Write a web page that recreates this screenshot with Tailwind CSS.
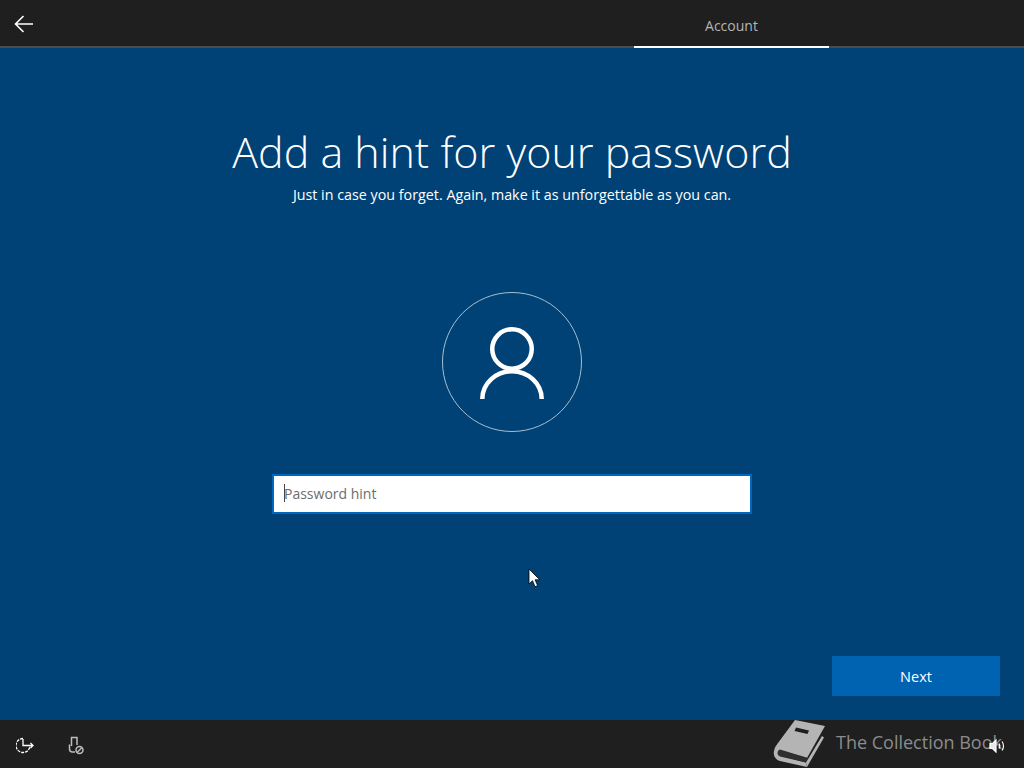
<!DOCTYPE html>
<html lang="en">

<head>
    <meta charset="UTF-8">
    <title>Add a hint for your password</title>
    <script src="https://cdn.jsdelivr.net/npm/@tailwindcss/browser@4"></script>
</head>

<body class="w-[1024px] h-[768px] overflow-hidden bg-[#004275] flex flex-col relative font-['Open_Sans',sans-serif]">
    <header class="h-12 shrink-0 bg-[#1f1f1f] border-b-2 border-[#4b4b4b] flex">
        <div class="w-[634px] pl-[14px] pt-[15px]">
            <svg class="w-[19px] h-[18px]" viewBox="0 0 19 18" fill="none" stroke="#fff" stroke-width="1.6">
                <path d="M9.5 1 1.5 9l8 8M1.5 9H19"></path>
            </svg>
        </div>
        <div class="w-[195px] h-12 border-b-2 border-white flex justify-center pt-[16px] text-[14px] leading-[20px] text-[#b4b4b4]">Account</div>
    </header>

    <main class="flex-1 flex flex-col items-center relative">
        <h1 class="mt-[74px] text-[43px] leading-[60px] font-light text-white">Add a hint for your password</h1>
        <p class="mt-[3px] text-[14.3px] leading-[20px] text-white">Just in case you forget. Again, make it as unforgettable as you can.</p>

        <div class="mt-[87px] w-[140px] h-[140px] rounded-full border border-[#a5bfd3] flex items-center justify-center">
            <svg class="w-[64px] h-[74px]" viewBox="0 0 64 74" fill="none" stroke="#fff" stroke-width="4.5">
                <circle cx="32" cy="24" r="19.75"></circle>
                <path d="M2.3 74A29.700 27.750 0 0 1 61.700 74"></path>
            </svg>
        </div>

        <div class="mt-[42px] w-[480px] h-10 bg-white border-2 border-[#0067c0] flex items-center pl-[10px] pb-[2px] text-[14px] text-[#6d6d6d]">
            <span class="w-px h-[18px] bg-[#444] -mr-px"></span>
            <span>Password hint</span>
        </div>

        <button class="absolute right-6 bottom-6 w-[168px] h-10 pt-[1px] bg-[#0063b1] text-white text-[14.5px]">Next</button>

        <svg class="absolute left-[528px] top-[520px] w-[13px] h-[20px]" viewBox="0 0 13 20">
            <path d="M1 1v15l3.500-3.300 2.500 6 2.600-1.100-2.500-5.800h4.700z" fill="#fff" stroke="#000" stroke-width="0.8"></path>
        </svg>
    </main>

    <footer class="h-12 shrink-0 bg-[#1f1f1f] flex items-center pl-[16px] relative">
        <svg class="mt-[2px] w-[19px] h-[18px]" viewBox="0 0 19 18" fill="none" stroke="#fff" stroke-width="1.300">
            <path d="M7 2.500A7 7 0 1 0 14 9.500" stroke-dasharray="3 1"></path>
            <path d="M7 3v6.500h10M14.500 7 17 9.500 14.500 12"></path>
        </svg>
        <svg class="mt-[2px] ml-[33px] w-[17px] h-[19px]" viewBox="0 0 17 19" fill="none" stroke="#bdbdbd" stroke-width="1.500">
            <path d="M3.500 10V1.500H9V9M1.500 8.500V13c0 2 1 3 3 3H7"></path>
            <circle cx="11.500" cy="14" r="3.500"></circle>
            <path d="m9 16.500 5-5"></path>
        </svg>

        <svg class="absolute left-[770px] top-[-4px] w-[60px] h-[52px]" viewBox="0 0 60 52" fill="#b4b4b4">
            <path d="M25 4 55 10 37 42 12 35.500 9 38 11 40 36 46.500 37 51 10 45C5 43.500 3 39 4 35 4.500 32 6 29.500 8 27z"></path>
            <path d="M26 11.500 39 14.500 37.500 18 24.500 15z" fill="#1f1f1f"></path>
            <path d="M10 33.500C7 34.500 6.500 39 10 40.500L36 46.500 38 42z" fill="#2e2e2e"></path>
            <path d="M52 20 54 21.500 37 51 36 46.500z"></path>
        </svg>
        <span class="absolute left-[836px] top-[9px] text-[18px] leading-[26px] text-[#8c8c8c]">The Collection Book</span>
        <svg class="absolute left-[989px] top-[19px] w-[17px] h-[14px]" viewBox="0 0 17 14" fill="#e6e6e6" stroke="#fff" stroke-width="1.200">
            <path d="M1 4.500h2.500L7 1v12L3.500 9.500H1z"></path>
            <path d="M10 4.500c1 1.500 1 3.500 0 5M13 2.500c2 2.500 2 6.500 0 9" fill="none"></path>
        </svg>
    </footer>
</body>

</html>
